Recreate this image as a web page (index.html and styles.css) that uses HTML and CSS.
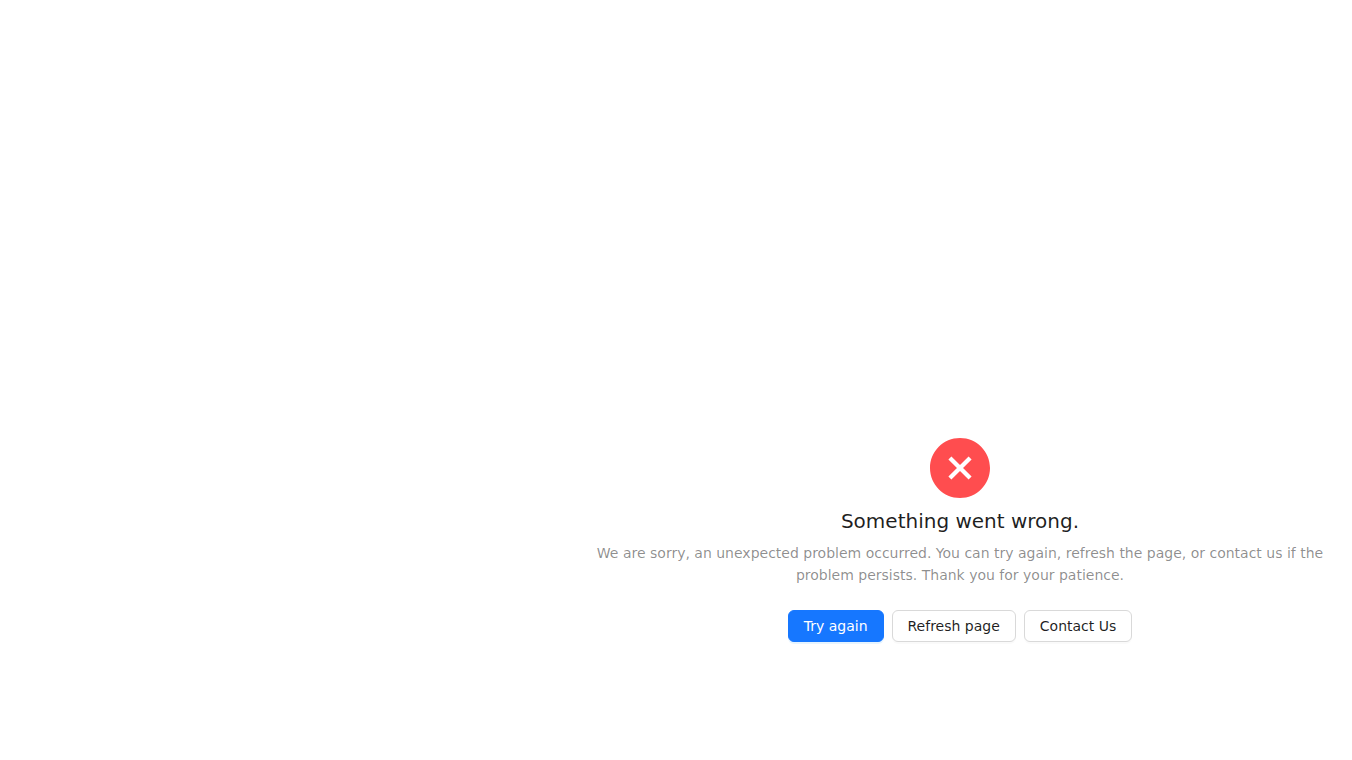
FILE: index.html
```html
<!DOCTYPE html>
<html lang="en">
<head>
    <meta charset="UTF-8">
    <meta name="viewport" content="width=device-width, initial-scale=1.0">
    <title>Something went wrong.</title>
    <link rel="stylesheet" href="styles.css">
</head>
<body>
    <main class="page">
        <section class="result">
            <svg class="result-icon" viewBox="64 64 896 896" fill="currentColor" aria-hidden="true">
                <path fill-rule="evenodd" d="M512 64c247.4 0 448 200.6 448 448S759.4 960 512 960 64 759.4 64 512 264.6 64 512 64zm127.98 274.82h-.04l-.08.06L512 466.75 384.14 338.88c-.04-.05-.06-.06-.08-.06a.12.12 0 00-.07 0c-.03 0-.05.01-.09.05l-45.02 45.02a.2.2 0 00-.05.09.12.12 0 000 .07v.02a.27.27 0 00.06.06L466.75 512 338.88 639.86c-.05.04-.06.06-.06.08a.12.12 0 000 .07c0 .03.01.05.05.09l45.02 45.02a.2.2 0 00.09.05.12.12 0 00.07 0c.02 0 .04-.01.08-.05L512 557.25l127.86 127.87c.04.04.06.05.08.05a.12.12 0 00.07 0c.03 0 .05-.01.09-.05l45.02-45.02a.2.2 0 00.05-.09.12.12 0 000-.07v-.02a.27.27 0 00-.05-.06L557.25 512l127.87-127.86c.04-.04.05-.06.05-.08a.12.12 0 000-.07c0-.03-.01-.05-.05-.09l-45.02-45.02a.2.2 0 00-.09-.05.12.12 0 00-.07 0z"/>
            </svg>
            <h1>Something went wrong.</h1>
            <p>We are sorry, an unexpected problem occurred. You can try again, refresh the page, or contact us if the problem persists. Thank you for your patience.</p>
            <div class="actions">
                <button type="button" class="primary">Try again</button>
                <button type="button">Refresh page</button>
                <button type="button">Contact Us</button>
            </div>
        </section>
    </main>
</body>
</html>
```
FILE: styles.css
```css
:root {
    --primary: #1677ff;
    --error: #ff4d4f;
    --text: rgba(0, 0, 0, 0.88);
    --text-secondary: rgba(0, 0, 0, 0.45);
    --border: #d9d9d9;
}
* {
    box-sizing: border-box;
}
body {
    margin: 0;
    font-family: "DejaVu Sans", sans-serif;
    font-size: 14px;
    line-height: 22px;
    color: var(--text);
    background: white;
}
.page {
    display: flex;
    justify-content: flex-end;
    align-items: flex-end;
    min-height: 100vh;
    padding: 0 24px 118px;
}
.result {
    width: 736px;
    max-width: 100%;
    text-align: center;
}
.result-icon {
    display: block;
    width: 60px;
    height: 60px;
    margin: 0 auto 8px;
    color: var(--error);
}
h1 {
    margin: 0 0 6px;
    font-size: 20px;
    font-weight: normal;
    line-height: 30px;
}
p {
    margin: 0 0 24px;
    color: var(--text-secondary);
}
.actions {
    display: flex;
    flex-wrap: wrap;
    justify-content: center;
    gap: 8px;
}
button {
    height: 32px;
    padding: 0 15px;
    font: inherit;
    color: var(--text);
    background: white;
    border: 1px solid var(--border);
    border-radius: 6px;
    box-shadow: 0 2px 0 rgba(0, 0, 0, 0.02);
    cursor: pointer;
}
button:hover {
    color: var(--primary);
    border-color: var(--primary);
}
.primary {
    color: white;
    background: var(--primary);
    border-color: var(--primary);
    box-shadow: 0 2px 0 rgba(5, 145, 255, 0.1);
}
.primary:hover {
    color: white;
    background: #4096ff;
}
```
